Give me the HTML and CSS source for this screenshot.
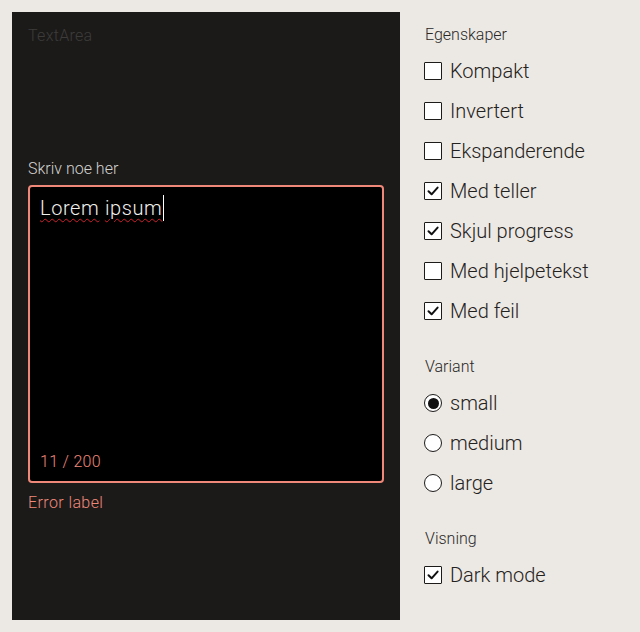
FILE: index.html
```html
<!DOCTYPE html>
<html lang="no">
<head>
<meta charset="utf-8">
<link rel="stylesheet" href="styles.css">
</head>
<body>
<div class="page">
  <div class="preview">
    <div class="preview-title">TextArea</div>
    <div class="field">
      <label class="field-label">Skriv noe her</label>
      <div class="textarea">
        <div class="ta-text"><span class="spell">Lorem</span> <span class="spell">ipsum</span><span class="caret"></span></div>
        <div class="counter">11 / 200</div>
      </div>
      <div class="error">Error label</div>
    </div>
  </div>
  <div class="controls">
    <div class="group">
      <div class="legend">Egenskaper</div>
      <div class="opt"><span class="cb"></span>Kompakt</div>
      <div class="opt"><span class="cb"></span>Invertert</div>
      <div class="opt"><span class="cb"></span>Ekspanderende</div>
      <div class="opt"><span class="cb on"><svg viewBox="0 0 18 18"><path d="M4.5 9.2 L7.6 12.3 L13.6 5.6" /></svg></span>Med teller</div>
      <div class="opt"><span class="cb on"><svg viewBox="0 0 18 18"><path d="M4.5 9.2 L7.6 12.3 L13.6 5.6" /></svg></span>Skjul progress</div>
      <div class="opt"><span class="cb"></span>Med hjelpetekst</div>
      <div class="opt"><span class="cb on"><svg viewBox="0 0 18 18"><path d="M4.5 9.2 L7.6 12.3 L13.6 5.6" /></svg></span>Med feil</div>
    </div>
    <div class="group">
      <div class="legend">Variant</div>
      <div class="opt"><span class="rb on"></span>small</div>
      <div class="opt"><span class="rb"></span>medium</div>
      <div class="opt"><span class="rb"></span>large</div>
    </div>
    <div class="group">
      <div class="legend">Visning</div>
      <div class="opt"><span class="cb on"><svg viewBox="0 0 18 18"><path d="M4.5 9.2 L7.6 12.3 L13.6 5.6" /></svg></span>Dark mode</div>
    </div>
  </div>
</div>
</body>
</html>
```
FILE: styles.css
```css
* { box-sizing: border-box; }
html, body { margin: 0; padding: 0; }
body {
  background: #ece8e3;
  font-family: Roboto, "Liberation Sans", sans-serif;
  font-weight: 300;
  color: #222;
  width: 640px;
  height: 632px;
  overflow: hidden;
}
.page {
  display: flex;
  padding: 12px;
  gap: 25px;
  height: 632px;
}
.preview {
  width: 388px;
  height: 608px;
  background: #1b1a19;
  padding: 12px 16px;
  flex: none;
}
.preview-title {
  font-size: 16px;
  line-height: 24px;
  color: #3d3c3a;
  letter-spacing: 0.3px;
}
.field {
  margin-top: 109px;
  display: flex;
  flex-direction: column;
}
.field-label {
  font-size: 16px;
  line-height: 24px;
  color: #d4d2cf;
  margin-bottom: 4px;
}
.textarea {
  width: 356px;
  height: 298px;
  background: #000;
  border: 2px solid #f0887a;
  border-radius: 4px;
  padding: 6px 10px 7px;
  display: flex;
  flex-direction: column;
  justify-content: space-between;
}
.ta-text {
  font-size: 20px;
  line-height: 30px;
  color: #f2f0ee;
  letter-spacing: 0.6px;
}
.spell {
  text-decoration: underline wavy #d0202a;
  text-decoration-thickness: 1px;
  text-underline-offset: 3px;
}
.caret {
  display: inline-block;
  width: 1px;
  height: 26px;
  background: #fff;
  vertical-align: -6px;
  margin-left: 1px;
}
.counter {
  font-size: 16px;
  line-height: 24px;
  color: #f0887a;
  letter-spacing: 0.3px;
}
.error {
  margin-top: 8px;
  font-size: 16px;
  line-height: 24px;
  color: #f0887a;
  letter-spacing: 0.4px;
}
.controls {
  display: flex;
  flex-direction: column;
  gap: 29px;
  padding-top: 11px;
}
.group {
  display: flex;
  flex-direction: column;
  gap: 10px;
}
.legend {
  font-size: 16px;
  line-height: 24px;
  color: #2a2827;
  margin-bottom: -1px;
}
.opt {
  display: flex;
  align-items: center;
  gap: 8px;
  font-size: 20px;
  line-height: 30px;
  color: #242220;
  margin-left: -1px;
}
.cb {
  width: 18px;
  height: 18px;
  border: 1.5px solid #1c1b1a;
  border-radius: 1px;
  background: #fff;
  flex: none;
  display: flex;
  align-items: center;
  justify-content: center;
}
.cb svg { width: 18px; height: 18px; flex: none; }
.cb svg path {
  fill: none;
  stroke: #111;
  stroke-width: 2;
  stroke-linecap: round;
  stroke-linejoin: round;
}
.rb {
  width: 18px;
  height: 18px;
  border: 1.5px solid #1c1b1a;
  border-radius: 50%;
  background: #fff;
  flex: none;
  display: flex;
  align-items: center;
  justify-content: center;
}
.rb.on::after {
  content: "";
  width: 11px;
  height: 11px;
  border-radius: 50%;
  background: #111;
}
```
